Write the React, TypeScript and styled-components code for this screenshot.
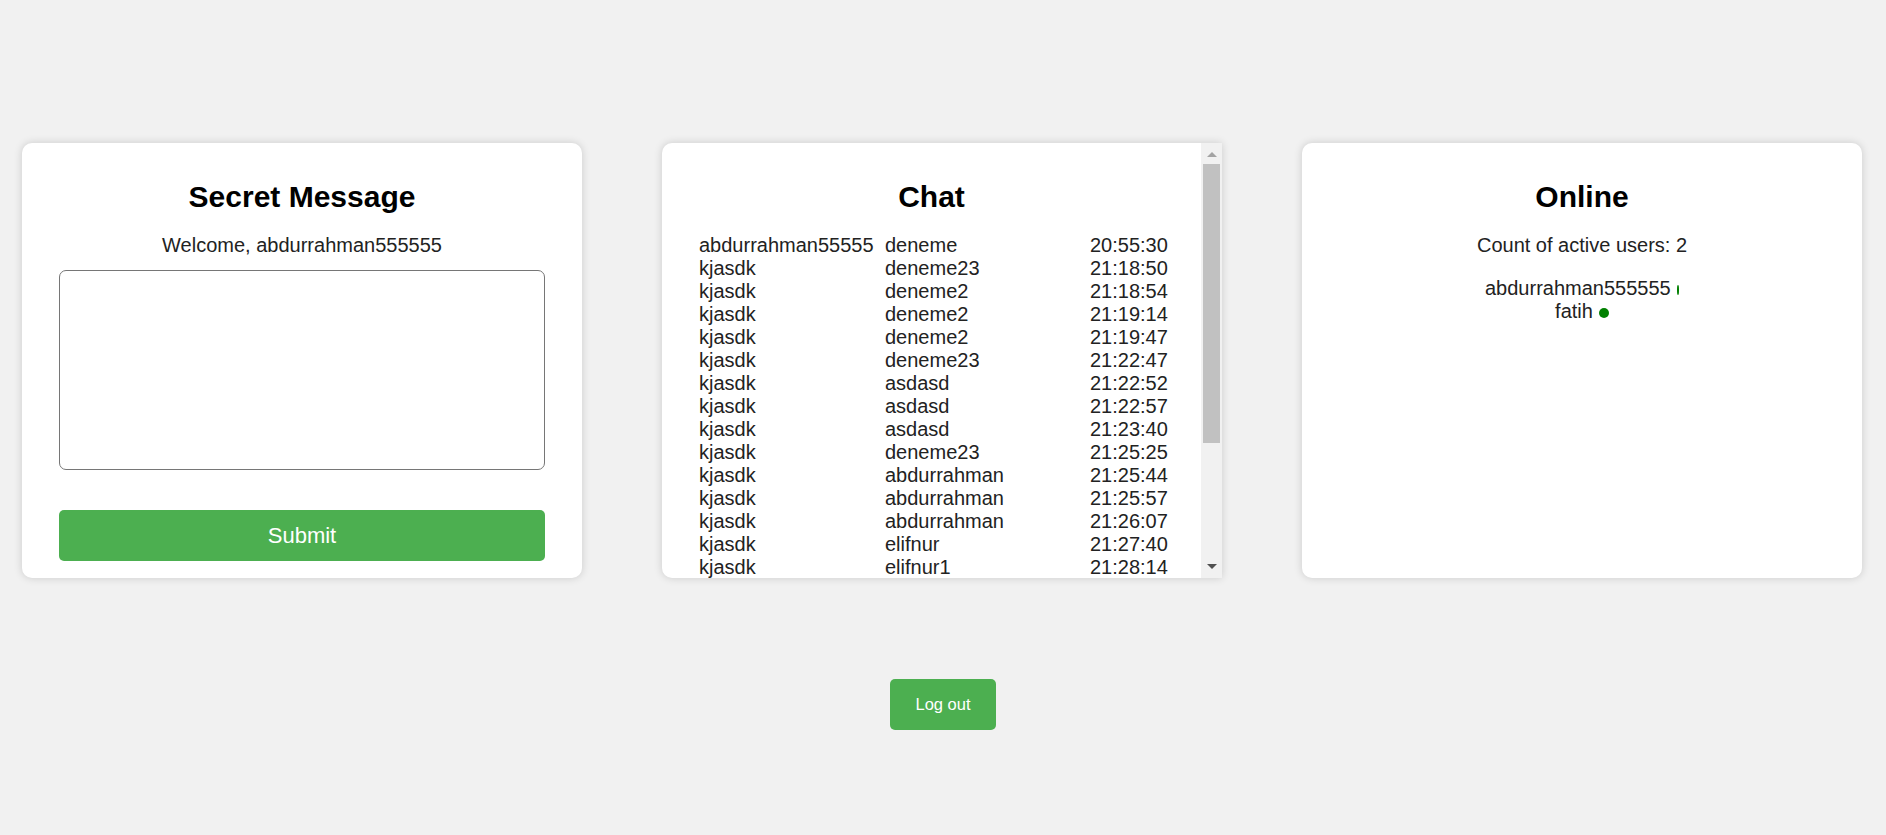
import React from 'react'
import styled, { createGlobalStyle } from 'styled-components'

const GlobalStyle = createGlobalStyle`
  html, body {
    margin: 0;
    padding: 0;
    background: #f1f1f1;
    font-family: "Liberation Sans", Arial, sans-serif;
    color: #222;
  }
`

const Page = styled.div`
  display: flex;
  flex-direction: column;
  align-items: center;
  padding-top: 143px;
`

const CardRow = styled.div`
  display: flex;
  gap: 80px;
  padding: 0 22px;
  align-self: flex-start;
`

const Card = styled.div`
  box-sizing: border-box;
  width: 560px;
  height: 435px;
  padding: 37px 37px 17px;
  background: #fff;
  border-radius: 10px;
  box-shadow: 0 0 8px rgba(0, 0, 0, 0.16);
  display: flex;
  flex-direction: column;
  align-items: stretch;
`

const ChatCard = styled(Card)`
  padding: 0;
  flex-direction: row;
  overflow: hidden;
  border-radius: 10px 0 0 10px;
`

const ChatBody = styled.div`
  flex: 1;
  min-width: 0;
  padding: 37px 37px 0;
  overflow: hidden;
`

const ScrollBar = styled.div`
  width: 21px;
  flex-shrink: 0;
  display: flex;
  flex-direction: column;
  background: #f1f1f1;
`

const ScrollButton = styled.div<{ $dir: 'up' | 'down' }>`
  height: 21px;
  display: flex;
  align-items: center;
  justify-content: center;

  &::before {
    content: '';
    border-left: 5px solid transparent;
    border-right: 5px solid transparent;
    ${({ $dir }) =>
      $dir === 'up'
        ? 'border-bottom: 5px solid #a3a3a3; margin-top: 1px;'
        : 'border-top: 5px solid #505050; margin-top: -2px;'}
  }
`

const Track = styled.div`
  flex: 1;
`

const Thumb = styled.div`
  height: 279px;
  margin: 0 2px;
  background: #c1c1c1;
`

const Title = styled.h2`
  margin: 0 0 20px;
  font-size: 30px;
  line-height: 34px;
  font-weight: bold;
  color: #000;
  text-align: center;
`

const Text = styled.p`
  margin: 0;
  font-size: 20px;
  line-height: 23px;
  text-align: center;
`

const MessageBox = styled.textarea`
  box-sizing: border-box;
  margin-top: 13px;
  width: 100%;
  height: 200px;
  border: 1px solid #767676;
  border-radius: 7px;
  resize: none;
  font-family: inherit;
`

const GreenButton = styled.button<{ $size: 'wide' | 'small' }>`
  border: none;
  background: #4caf50;
  color: #fff;
  font-family: "Liberation Sans", Arial, sans-serif;
  border-radius: 5px;
  cursor: pointer;
  height: 51px;
  font-size: ${({ $size }) => ($size === 'wide' ? '22px' : '16.5px')};
  padding: ${({ $size }) => ($size === 'wide' ? '0' : '0 25px')};
  margin-top: ${({ $size }) => ($size === 'wide' ? '40px' : '101px')};
  width: ${({ $size }) => ($size === 'wide' ? '100%' : 'auto')};
`

const ChatGrid = styled.div`
  display: grid;
  grid-template-columns: 186px 205px minmax(0, 1fr);
  font-size: 20px;
  line-height: 23px;
  white-space: nowrap;
`

const UserList = styled.div`
  margin-top: 20px;
  display: flex;
  flex-direction: column;
  align-items: center;
`

const UserRow = styled.div`
  display: flex;
  align-items: flex-end;
  max-width: 194px;
  font-size: 20px;
  line-height: 23px;
  white-space: nowrap;
`

const UserName = styled.span`
  flex-shrink: 0;
`

const Dot = styled.span`
  width: 10px;
  flex-shrink: 1;
  min-width: 0;
  height: 10px;
  margin: 0 0 5px 6px;
  border-radius: 50%;
  background: #008000;
`

const messages: [string, string, string][] = [
  ['abdurrahman55555', 'deneme', '20:55:30'],
  ['kjasdk', 'deneme23', '21:18:50'],
  ['kjasdk', 'deneme2', '21:18:54'],
  ['kjasdk', 'deneme2', '21:19:14'],
  ['kjasdk', 'deneme2', '21:19:47'],
  ['kjasdk', 'deneme23', '21:22:47'],
  ['kjasdk', 'asdasd', '21:22:52'],
  ['kjasdk', 'asdasd', '21:22:57'],
  ['kjasdk', 'asdasd', '21:23:40'],
  ['kjasdk', 'deneme23', '21:25:25'],
  ['kjasdk', 'abdurrahman', '21:25:44'],
  ['kjasdk', 'abdurrahman', '21:25:57'],
  ['kjasdk', 'abdurrahman', '21:26:07'],
  ['kjasdk', 'elifnur', '21:27:40'],
  ['kjasdk', 'elifnur1', '21:28:14'],
]

const onlineUsers = ['abdurrahman555555', 'fatih']

export default function App() {
  return (
    <>
      <GlobalStyle />
      <Page>
        <CardRow>
          <Card>
            <Title>Secret Message</Title>
            <Text>Welcome, abdurrahman555555</Text>
            <MessageBox />
            <GreenButton $size="wide">Submit</GreenButton>
          </Card>

          <ChatCard>
            <ChatBody>
              <Title>Chat</Title>
              <ChatGrid>
                {messages.map(([user, msg, time], i) => (
                  <React.Fragment key={i}>
                    <span>{user}</span>
                    <span>{msg}</span>
                    <span>{time}</span>
                  </React.Fragment>
                ))}
              </ChatGrid>
            </ChatBody>
            <ScrollBar>
              <ScrollButton $dir="up" />
              <Track>
                <Thumb />
              </Track>
              <ScrollButton $dir="down" />
            </ScrollBar>
          </ChatCard>

          <Card>
            <Title>Online</Title>
            <Text>Count of active users: {onlineUsers.length}</Text>
            <UserList>
              {onlineUsers.map((u) => (
                <UserRow key={u}>
                  <UserName>{u}</UserName>
                  <Dot />
                </UserRow>
              ))}
            </UserList>
          </Card>
        </CardRow>

        <GreenButton $size="small">Log out</GreenButton>
      </Page>
    </>
  )
}
